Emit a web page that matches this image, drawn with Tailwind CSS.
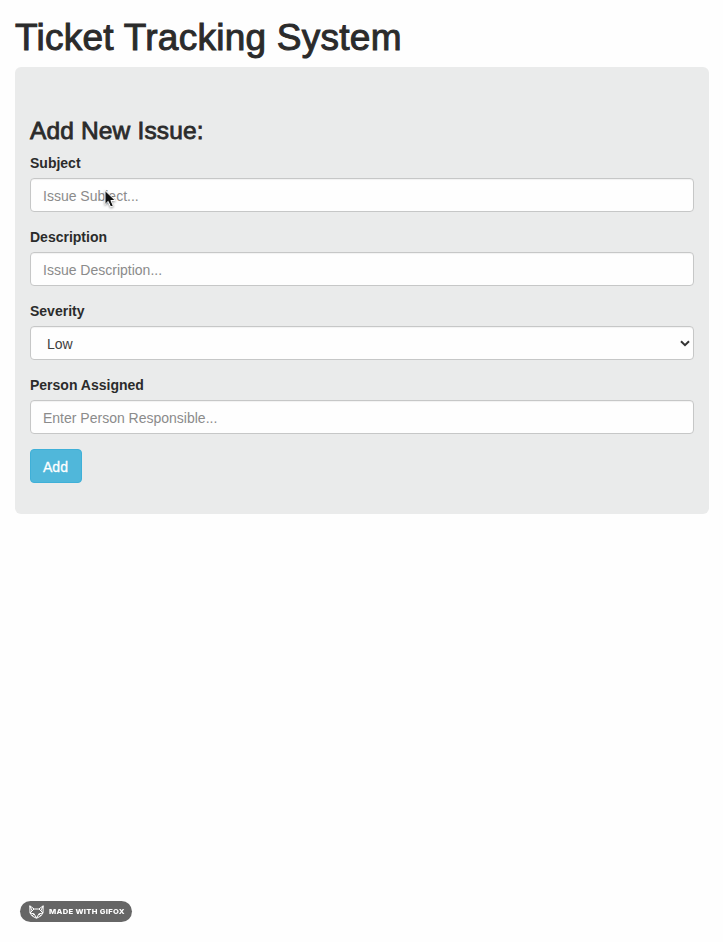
<!DOCTYPE html>
<html lang="en">
<head>
<meta charset="utf-8">
<title>Ticket Tracking System</title>
<script src="https://cdn.jsdelivr.net/npm/@tailwindcss/browser@4"></script>
</head>
<body class="relative h-[942px] overflow-hidden bg-[#fefefe] px-[15px] pr-[14px] pt-[18px] font-['Liberation_Sans',Arial,sans-serif] text-sm text-[#2b2b2b]">
<h1 class="h-[49px] whitespace-nowrap text-[37px] leading-[40px] tracking-[0.26px] [-webkit-text-stroke:1px_#2b2b2b]"><span>Ticket Tracking System</span></h1>
<main class="h-[447px] rounded-md bg-[#eaebeb] px-[15px] pt-[51px]">
  <h3 class="h-[35px] text-[24.5px] leading-[26px] tracking-[0.15px] [-webkit-text-stroke:0.8px_#2b2b2b]"><span>Add New Issue:</span></h3>
  <form class="flex flex-col gap-[15px]">
    <div class="flex flex-col gap-[6px]">
      <label class="h-[19px] font-bold leading-5" for="s"><span>Subject</span></label>
      <input id="s" class="h-[34px] w-full rounded border border-[#c6c7c7] bg-[#fefefe] px-3 pt-px shadow-[inset_0_1px_1px_#0000000d] placeholder:text-[#8b8b8b]" placeholder="Issue Subject...">
    </div>
    <div class="flex flex-col gap-[6px]">
      <label class="h-[19px] font-bold leading-5" for="d"><span>Description</span></label>
      <input id="d" class="h-[34px] w-full rounded border border-[#c6c7c7] bg-[#fefefe] px-3 pt-px shadow-[inset_0_1px_1px_#0000000d] placeholder:text-[#8b8b8b]" placeholder="Issue Description...">
    </div>
    <div class="flex flex-col gap-[6px]">
      <label class="h-[19px] font-bold leading-5"><span>Severity</span></label>
      <div class="flex h-[34px] items-center justify-between rounded border border-[#c6c7c7] bg-[#fefefe] pl-4 pr-[3px] shadow-[inset_0_1px_1px_#0000000d]">
        <span class="pt-px text-[#404040]">Low</span>
        <svg class="h-[7px] w-[10px]" viewBox="0 0 10 7" fill="none" stroke="#333" stroke-width="2"><path d="M1 1.2 5 5.2 9 1.2"/></svg>
      </div>
    </div>
    <div class="flex flex-col gap-[6px]">
      <label class="h-[19px] font-bold leading-5" for="p"><span>Person Assigned</span></label>
      <input id="p" class="h-[34px] w-full rounded border border-[#c6c7c7] bg-[#fefefe] px-3 pt-px shadow-[inset_0_1px_1px_#0000000d] placeholder:text-[#8b8b8b]" placeholder="Enter Person Responsible...">
    </div>
    <button type="button" class="h-[34px] w-[52px] rounded border border-[#3fb0d8] bg-[#50b7da] pr-px pt-px text-white [-webkit-text-stroke:0.3px_#fff]">Add</button>
  </form>
</main>
<svg class="absolute left-[103px] top-[189px] h-[21px] w-[14px] drop-shadow-[0_1px_1px_#0006]" viewBox="0 0 14 21"><path d="M2 1.5v14l3.2-3.1 2.4 5.6 2.7-1.2-2.4-5.3h4.4z" fill="#111" stroke="#fff" stroke-width="1"/></svg>
<div class="absolute left-[20px] top-[901px] flex h-[21px] w-[112px] items-center rounded-full bg-[#666] pl-[9px] text-white">
  <svg class="h-[14px] w-[15px] shrink-0" viewBox="0 0 15 14" fill="none" stroke="#fff" stroke-width="1" stroke-linejoin="round"><path d="M.8.8 1 8l2.2 3 4.3 2.3 4.3-2.3L14 8l.2-7.2L9.8 4H5.2zM1 8l4-4M14 8l-4-4M1 8l4 .8 2.5 4.2L10 8.8l4-.8M.8.8 3.2 5.8M14.2.8 11.8 5.8M3.2 11 5 8.8M11.8 11 10 8.8"/></svg>
  <span class="ml-[5px] origin-left scale-x-[1.12] whitespace-nowrap font-[Inter] text-[6.8px] font-extrabold tracking-[0.28px]">MADE WITH GIFOX</span>
</div>
</body>
</html>
